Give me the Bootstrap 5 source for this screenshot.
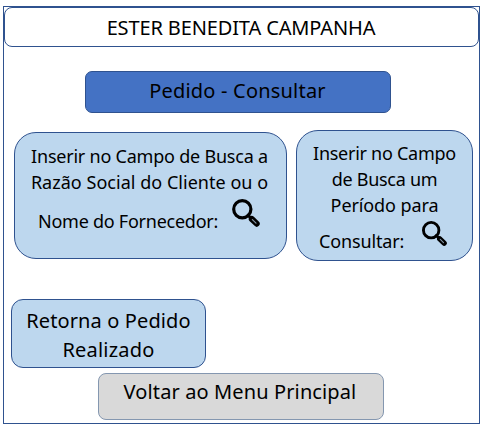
<!DOCTYPE html>
<html lang="pt-BR">
<head>
<meta charset="utf-8">
<meta name="viewport" content="width=device-width, initial-scale=1">
<title>Pedido - Consultar</title>
<link href="https://cdn.jsdelivr.net/npm/bootstrap@5.3.0/dist/css/bootstrap.min.css" rel="stylesheet">
<style>
  body { font-family: "Noto Sans", "Open Sans", sans-serif; color: #000; background: #fff; overflow: hidden; }
  .screen { width: 477px; height: 418px; margin: 6px 0 0 3px; border: 1px solid #2f528f; }
  .panel { border: 1px solid #2f528f; font-size: 20px; text-align: center; white-space: nowrap; }
  .panel-name { width: 475px; height: 40px; border-radius: 8px; line-height: 39px; letter-spacing: -.13px; padding-right: 1px; }
  .panel-title { width: 306px; height: 42px; margin: 24px 0 0 81px; border-radius: 7px; background: #4472c4; line-height: 37px; letter-spacing: .2px; padding-right: 1px; }
  .searches { margin: 17px 0 0 10px; gap: 9px; }
  .panel-blue { background: #bdd7ee; }
  .search { font-size: 18px; line-height: 26px; border-radius: 22px; }
  .search-name { width: 273px; height: 127px; margin-top: 2px; padding: 10px 2px 0 0; }
  .search-period { width: 177px; height: 131px; padding-top: 9px; }
  .row-name { height: 52px; padding-left: 23px; }
  .row-name svg { margin: 3px 0 0 13px; }
  .row-period { height: 36px; padding-left: 22px; }
  .row-period svg { margin: 2px 0 0 17px; }
  .panel-return { width: 195px; height: 69px; margin: 38px 0 0 7px; padding-top: 6px; border-radius: 12px; line-height: 29px; }
  .panel-back { width: 286px; height: 47px; margin: 5px 0 0 94px; border-radius: 8px; background: #d9d9d9; border-color: #8497b0; line-height: 36px; letter-spacing: .12px; padding-right: 2px; }
  .t1 { letter-spacing: -.22px; } .t2 { letter-spacing: .03px; } .t3 { letter-spacing: -.25px; }
  .p1 { letter-spacing: -.27px; } .p2 { letter-spacing: -.28px; } .p3 { letter-spacing: -.1px; } .p4 { letter-spacing: -.15px; }
  .r1 { letter-spacing: .12px; } .r2 { letter-spacing: .2px; }
</style>
</head>
<body>
<main class="screen d-flex flex-column align-items-start">
  <header class="panel panel-name">ESTER BENEDITA CAMPANHA</header>
  <h1 class="panel panel-title fw-normal mb-0">Pedido - Consultar</h1>
  <section class="searches d-flex align-items-start">
    <div class="panel panel-blue search search-name">
      <div class="t1">Inserir no Campo de Busca a</div>
      <div class="t2">Razão Social do Cliente ou o</div>
      <div class="row-name d-flex align-items-center">
        <span class="t3">Nome do Fornecedor:</span>
        <svg class="align-self-start" width="30" height="30" viewBox="0 0 30 30" fill="none" stroke="#000" stroke-linecap="round">
          <circle cx="11.3" cy="11.3" r="8.6" stroke-width="3.2"/>
          <path d="M17 17.2l3 3" stroke-width="3"/>
          <path d="M20.8 21l4.9 4.7" stroke-width="6"/>
          <path d="M21.4 21.6l3.6 3.5" stroke="#8797a6" stroke-width="1.2"/>
        </svg>
      </div>
    </div>
    <div class="panel panel-blue search search-period">
      <div class="p1">Inserir no Campo</div>
      <div class="p2">de Busca um</div>
      <div class="p3">Período para</div>
      <div class="row-period d-flex align-items-end">
        <span class="p4">Consultar:</span>
        <svg class="align-self-start" width="27" height="27" viewBox="0 0 30 30" fill="none" stroke="#000" stroke-linecap="round">
          <circle cx="11.3" cy="11.3" r="8.6" stroke-width="3.2"/>
          <path d="M17 17.2l3 3" stroke-width="3"/>
          <path d="M20.8 21l4.9 4.7" stroke-width="6"/>
          <path d="M21.4 21.6l3.6 3.5" stroke="#8797a6" stroke-width="1.2"/>
        </svg>
      </div>
    </div>
  </section>
  <div class="panel panel-blue panel-return">
    <div class="r1">Retorna o Pedido</div>
    <div class="r2">Realizado</div>
  </div>
  <div class="panel panel-back">Voltar ao Menu Principal</div>
</main>
<script src="https://cdn.jsdelivr.net/npm/bootstrap@5.3.0/dist/js/bootstrap.bundle.min.js"></script>
</body>
</html>
